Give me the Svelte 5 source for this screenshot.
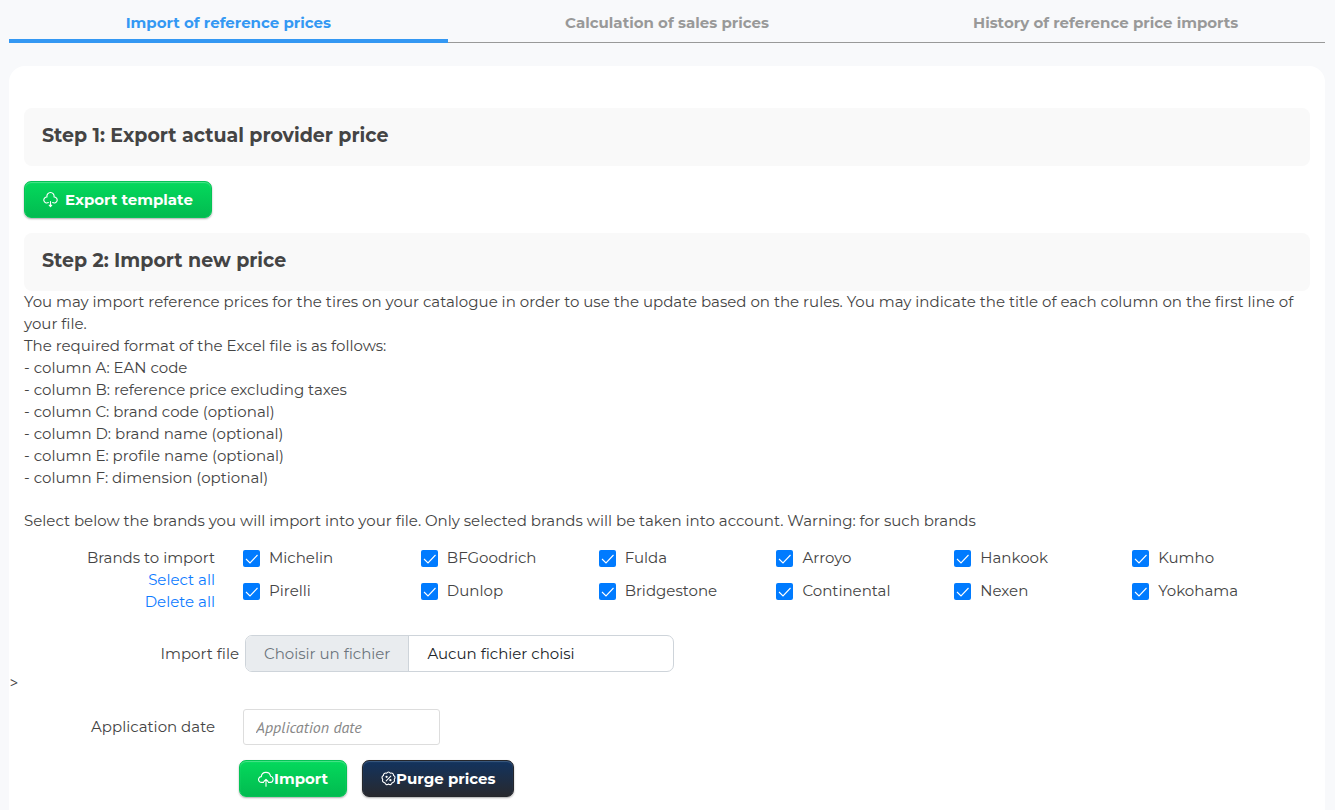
<script lang="ts">
  interface Brand {
    name: string;
    checked: boolean;
  }

  const tabs = [
    "Import of reference prices",
    "Calculation of sales prices",
    "History of reference price imports",
  ];

  const columns = [
    "column A: EAN code",
    "column B: reference price excluding taxes",
    "column C: brand code (optional)",
    "column D: brand name (optional)",
    "column E: profile name (optional)",
    "column F: dimension (optional)",
  ];

  const names = [
    "Michelin", "BFGoodrich", "Fulda", "Arroyo", "Hankook", "Kumho",
    "Pirelli", "Dunlop", "Bridgestone", "Continental", "Nexen", "Yokohama",
  ];

  let active = $state(0);
  let brands: Brand[] = $state(names.map((name) => ({ name, checked: true })));
  let fileName = $state("");
  let applicationDate = $state("");

  function setAll(e: MouseEvent, checked: boolean) {
    e.preventDefault();
    for (const b of brands) b.checked = checked;
  }

  function selectTab(e: MouseEvent, i: number) {
    e.preventDefault();
    active = i;
  }

  function onFile(e: Event) {
    const input = e.currentTarget as HTMLInputElement;
    fileName = input.files?.[0]?.name ?? "";
  }
</script>

<nav class="tabs">
  {#each tabs as tab, i (tab)}
    <a href="#tab-{i}" class="tab" class:active={active === i} onclick={(e) => selectTab(e, i)}>{tab}</a>
  {/each}
</nav>

<main class="card">
  <section class="block">
    <h2>Step 1: Export actual provider price</h2>
    <button type="button" class="btn green export">
      <svg viewBox="0 0 15 16" width="15" height="16" aria-hidden="true">
        <path d="M5.300 10.600A3 3 0 1 1 4 5A3.600 3.600 0 1 1 11 5A3 3 0 1 1 9.700 10.600" />
        <path d="M7.500 9.500v4M6.200 13.200h2.600l-1.300 1.500z" />
      </svg>
      Export template
    </button>
  </section>

  <section class="block">
    <h2>Step 2: Import new price</h2>
    <div class="help">
      <p>You may import reference prices for the tires on your catalogue in order to use the update based on the rules. You may indicate the title of each column on the first line of your file.</p>
      <p>The required format of the Excel file is as follows:</p>
      {#each columns as column (column)}
        <p>- {column}</p>
      {/each}
      <p class="select-note">Select below the brands you will import into your file. Only selected brands will be taken into account. Warning: for such brands</p>
    </div>

    <div class="row">
      <div class="row-label">
        <div id="brands-label">Brands to import</div>
        <div><a href="#select" onclick={(e) => setAll(e, true)}>Select all</a></div>
        <div><a href="#delete" onclick={(e) => setAll(e, false)}>Delete all</a></div>
      </div>
      <div class="brands" role="group" aria-labelledby="brands-label">
        {#each brands as brand (brand.name)}
          <label class="brand">
            <input type="checkbox" bind:checked={brand.checked} />
            <span class="box">
              <svg viewBox="0 0 17 17" width="17" height="17" aria-hidden="true">
                <path d="M3 9 7 13 14.5 5" />
              </svg>
            </span>
            {brand.name}
          </label>
        {/each}
      </div>
    </div>

    <div class="row file-row">
      <label class="row-label" for="import-file">Import file</label>
      <div class="file">
        <input id="import-file" type="file" onchange={onFile} />
        <span class="file-button">Choisir un fichier</span>
        <span class="file-name">{fileName || "Aucun fichier choisi"}</span>
      </div>
    </div>
  </section>

  <p class="stray">&gt;</p>

  <section class="block">
    <div class="row date-row">
      <label class="row-label" for="application-date">Application date</label>
      <input id="application-date" class="date" type="text" placeholder="Application date" bind:value={applicationDate} />
    </div>
    <div class="actions">
      <button type="button" class="btn green">
        <svg viewBox="0 0 16 16" width="16" height="16" aria-hidden="true">
          <path d="M5.500 11.400H3.600A2.900 2.900 0 0 1 3.300 5.600A4.700 4.700 0 0 1 12.600 5.300A3.100 3.100 0 0 1 12.500 11.400H10.500" />
          <path d="M8 15.300V8.500M5.900 10.500 8 8.400l2.100 2.100" />
        </svg>Import
      </button>
      <button type="button" class="btn navy">
        <svg viewBox="0 0 15 15" width="15" height="15" aria-hidden="true">
          <path d="M7.5 1Q8.7 1 9.3 2.2Q10.7 1.7 11.6 2.5Q12.7 3.1 12.5 4.5Q13.8 5 14 6.2Q14.2 7.4 13.2 8.3Q13.9 9.600 13.200 10.600Q12.600 11.700 11.200 11.700Q10.900 13 9.800 13.500Q8.600 14 7.500 13Q6.400 14 5.200 13.500Q4.100 13 3.800 11.700Q2.400 11.700 1.800 10.600Q1.100 9.600 1.800 8.300Q.8 7.400 1 6.200Q1.200 5 2.500 4.500Q2.300 3.100 3.400 2.500Q4.300 1.700 5.700 2.200Q6.300 1 7.500 1z" />
          <path d="M5.200 9.800 9.800 5.200" />
          <circle cx="5.600" cy="5.800" r=".6" />
          <circle cx="9.400" cy="9.200" r=".6" />
        </svg>Purge prices
      </button>
    </div>
  </section>
</main>

<style>
  :global(body) {
    background: #f8f9fb;
    color: #444;
    font-family: Montserrat, Inter, sans-serif;
    font-size: 15px;
    line-height: 22px;
  }

  a {
    color: #0d7bff;
    text-decoration: none;
  }

  p {
    margin: 0;
  }

  .tabs {
    display: grid;
    grid-template-columns: repeat(3, 1fr);
    margin: 0 10px 23px 9px;
  }

  .tab {
    box-sizing: border-box;
    height: 43px;
    padding-top: 12px;
    border-bottom: 1px solid #999;
    color: #999;
    font-weight: 700;
    text-align: center;
  }

  .tab.active {
    border-bottom: 4px solid #3498f3;
    color: #3498f3;
  }

  .card {
    margin: 0 10px 0 9px;
    padding: 42px 0 13px;
    background: #fff;
    border-radius: 16px 16px 0 0;
  }

  .block {
    padding: 0 15px;
  }

  h2 {
    margin: 0 0 15px;
    padding: 16px 18px 18px;
    background: #f9f9f9;
    border-radius: 8px;
    font-size: 19px;
    font-weight: 700;
    line-height: 24px;
  }

  .block + .block h2 {
    margin: 15px 0 0;
  }

  .btn {
    display: inline-flex;
    align-items: center;
    height: 37px;
    padding: 0 18px;
    border: 1px solid;
    border-radius: 7px;
    color: #fff;
    font: inherit;
    font-weight: 700;
    cursor: pointer;
  }

  .btn svg {
    fill: none;
    stroke: currentColor;
    stroke-width: 1.1;
    stroke-linecap: round;
    stroke-linejoin: round;
  }

  .green {
    background: linear-gradient(#04d95c, #02bb50);
    border-color: #05c355;
    box-shadow: inset 0 1px 1px #4be38a, 0 1px 2px #0005;
  }

  .navy {
    background: linear-gradient(#12335f, #28292e);
    border-color: #25272c;
    box-shadow: inset 0 1px 1px #3c5a80, 0 1px 2px #0005;
  }

  .export {
    display: flex;
    gap: 7px;
  }

  .select-note {
    margin-top: 21px;
  }

  .row {
    display: flex;
    gap: 28px;
    margin-top: 15px;
  }

  .row-label {
    flex: 0 0 191px;
    text-align: right;
  }

  .brands {
    display: grid;
    flex: 1;
    grid-template-columns: repeat(6, 1fr);
    row-gap: 11px;
    align-content: start;
  }

  .brand {
    display: flex;
    align-items: center;
    position: relative;
    gap: 9px;
  }

  .brand input {
    position: absolute;
    width: 17px;
    height: 17px;
    margin: 0;
    opacity: 0;
  }

  .box {
    box-sizing: border-box;
    width: 17px;
    height: 17px;
    border: 1px solid #adb5bd;
    border-radius: 2px;
    overflow: hidden;
  }

  .box svg {
    display: none;
    fill: none;
    stroke: #fff;
    stroke-width: 1.1;
  }

  .brand input:checked + .box {
    border: 0;
    background: #007bff;
  }

  .brand input:checked + .box svg {
    display: block;
  }

  .file-row {
    align-items: center;
    gap: 6px;
    margin-top: 22px;
  }

  .file-row .row-label {
    flex-basis: 215px;
  }

  .file {
    box-sizing: border-box;
    display: flex;
    position: relative;
    width: 429px;
    height: 37px;
    border: 1px solid #ced4da;
    border-radius: 7px;
    line-height: 35px;
    overflow: hidden;
  }

  .file input {
    position: absolute;
    inset: 0;
    opacity: 0;
    cursor: pointer;
  }

  .file-button {
    padding: 0 18px;
    background: #e9ecef;
    border-right: 1px solid #ced4da;
    color: #6c757d;
  }

  .file-name {
    padding: 0 18px;
    color: #212529;
  }

  .stray {
    padding: 0 1px;
    font-family: "Open Sans", sans-serif;
    font-size: 14px;
  }

  .date-row {
    align-items: center;
    margin-top: 15px;
  }

  .date {
    box-sizing: border-box;
    width: 197px;
    height: 36px;
    padding: 0 12px;
    border: 1px solid #ddd;
    border-radius: 3px;
    background: #fff;
    color: #444;
    font: 16px "PT Sans", "Open Sans", sans-serif;
  }

  .date::placeholder {
    color: #888;
    font-style: italic;
    opacity: 1;
  }

  .actions {
    display: flex;
    gap: 15px;
    margin: 15px 0 0 215px;
  }
</style>
